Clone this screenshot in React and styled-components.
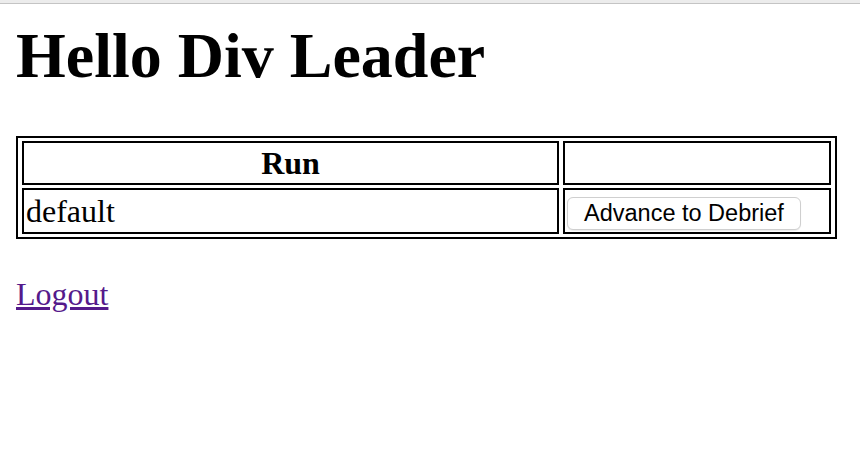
import React from "react";
import styled, { createGlobalStyle } from "styled-components";

const Global = createGlobalStyle`
  html, body { margin: 0; padding: 0; background: #ffffff; }
  body { font-family: "Liberation Serif", "Times New Roman", serif; color: #000; font-size: 32px; }
`;

const TopEdge = styled.div`
  height: 3px;
  background: #ececec;
  border-bottom: 1px solid #c4c4c4;
`;

const Page = styled.div`
  padding: 0 16px;
`;

const Title = styled.h1`
  font-size: 64px;
  font-weight: bold;
  margin: 15px 0 44px;
  line-height: 73px;
`;

const Table = styled.table`
  width: 821px;
  table-layout: fixed;
  border: 2px solid #000;
  border-spacing: 4px 3px;
  border-collapse: separate;
`;

const Cell = styled.td`
  border: 2px solid #000;
  padding: 2px;
  font-size: 32px;
  line-height: 36px;
  height: 36px;
  width: ${(p) => p.$w || "auto"};
  text-align: ${(p) => (p.$head ? "center" : "left")};
  font-weight: ${(p) => (p.$head ? "bold" : "normal")};
  vertical-align: middle;
`;

const Button = styled.button`
  font-family: "Liberation Sans", Arial, sans-serif;
  font-size: 23.5px;
  color: #000;
  background: #fff;
  border: 1px solid #cfcfcf;
  border-radius: 6px;
  padding: 2px 16px 3px;
  line-height: 26px;
  box-shadow: 0 1px 1px rgba(0, 0, 0, 0.08);
  cursor: pointer;
`;

const LinkLine = styled.p`
  margin: 37px 0 0;
  line-height: 37px;
`;

const Link = styled.a`
  color: #551a8b;
  text-decoration: underline;
`;

export default function App() {
  return (
    <>
      <Global />
      <TopEdge />
      <Page>
        <Title>Hello Div Leader</Title>
        <Table>
          <tbody>
            <tr>
              <Cell as="th" $head $w="529px">Run</Cell>
              <Cell as="th" $head></Cell>
            </tr>
            <tr>
              <Cell>default</Cell>
              <Cell>
                <Button type="button">Advance to Debrief</Button>
              </Cell>
            </tr>
          </tbody>
        </Table>
        <LinkLine>
          <Link href="#">Logout</Link>
        </LinkLine>
      </Page>
    </>
  );
}
